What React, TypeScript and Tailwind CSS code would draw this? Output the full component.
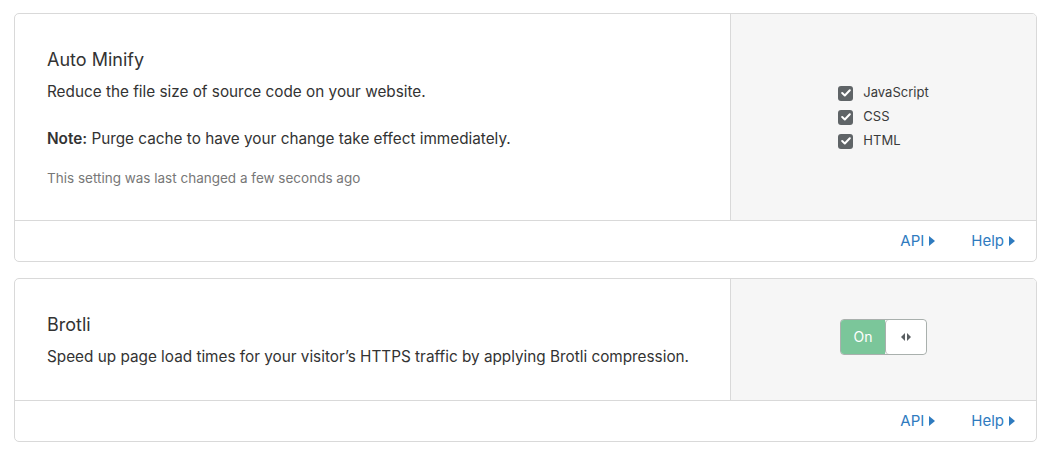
import React from 'react';

const font = { fontFamily: 'Inter, "Noto Sans", sans-serif' };

function Caret() {
  return (
    <svg width="6" height="10" viewBox="0 0 6 10" className="ml-[5px] inline-block">
      <path d="M0 0 L6 5 L0 10 Z" fill="currentColor" />
    </svg>
  );
}

function CardFooter() {
  return (
    <div className="flex h-[41px] items-center justify-end gap-[36px] border-t border-[#d9d9d9] pr-[21px] text-[15px] text-[#2f7bbf]">
      <a className="flex items-center">API<Caret /></a>
      <a className="flex items-center">Help<Caret /></a>
    </div>
  );
}

function Checkbox({ label }: { label: string }) {
  return (
    <div className="flex h-[24px] items-center gap-[10px] text-[13px] text-[#3a3a3a]">
      <span className="flex h-[15px] w-[15px] items-center justify-center rounded-[3px] bg-[#5f6467]">
        <svg width="10" height="8" viewBox="0 0 10 8">
          <path d="M1.2 4 L3.8 6.5 L8.8 1.3" stroke="white" strokeWidth="2" fill="none" strokeLinecap="round" strokeLinejoin="round" />
        </svg>
      </span>
      {label}
    </div>
  );
}

function Toggle() {
  return (
    <div className="flex h-[36px] w-[87px] overflow-hidden rounded-[4px] border border-[#a9b0ad]">
      <div className="flex w-[44px] items-center justify-center bg-[#7bc69a] text-[14px] text-white">On</div>
      <div className="flex flex-1 items-center justify-center rounded-[4px] border-l border-[#a9b0ad] bg-white">
        <svg width="10" height="8" viewBox="0 0 10 8">
          <path d="M4 0 L0 4 L4 8 Z M6 0 L10 4 L6 8 Z" fill="#5a5f62" />
        </svg>
      </div>
    </div>
  );
}

export default function App() {
  return (
    <div className="min-h-[454px] bg-white px-[14px] pt-[13px]" style={font}>
      <div className="flex w-[1023px] flex-col gap-[16px]">
        <div className="overflow-hidden rounded-[5px] border border-[#d9d9d9]">
          <div className="flex h-[206px]">
            <div className="flex-1 pl-[32px] pt-[34px]">
              <h3 className="text-[18px] leading-[24px] text-[#333]">Auto Minify</h3>
              <p className="mt-[9px] text-[15.3px] leading-[22px] text-[#333]">Reduce the file size of source code on your website.</p>
              <p className="mt-[25px] text-[15.3px] leading-[22px] text-[#333]">
                <b className="font-semibold">Note:</b> Purge cache to have your change take effect immediately.
              </p>
              <p className="mt-[19px] text-[13.5px] leading-[18px] text-[#777]">This setting was last changed a few seconds ago</p>
            </div>
            <div className="flex w-[306px] items-center justify-center border-l border-[#d9d9d9] bg-[#f6f6f6]">
              <div className="flex flex-col">
                <Checkbox label="JavaScript" />
                <Checkbox label="CSS" />
                <Checkbox label="HTML" />
              </div>
            </div>
          </div>
          <CardFooter />
        </div>

        <div className="overflow-hidden rounded-[5px] border border-[#d9d9d9]">
          <div className="flex h-[121px]">
            <div className="flex-1 pl-[32px] pt-[34px]">
              <h3 className="text-[18px] leading-[24px] text-[#333]">Brotli</h3>
              <p className="mt-[9px] text-[15.3px] leading-[22px] text-[#333]">
                Speed up page load times for your visitor’s HTTPS traffic by applying Brotli compression.
              </p>
            </div>
            <div className="flex w-[306px] items-center justify-center border-l border-[#d9d9d9] bg-[#f6f6f6] pb-[6px]">
              <Toggle />
            </div>
          </div>
          <CardFooter />
        </div>
      </div>
    </div>
  );
}
